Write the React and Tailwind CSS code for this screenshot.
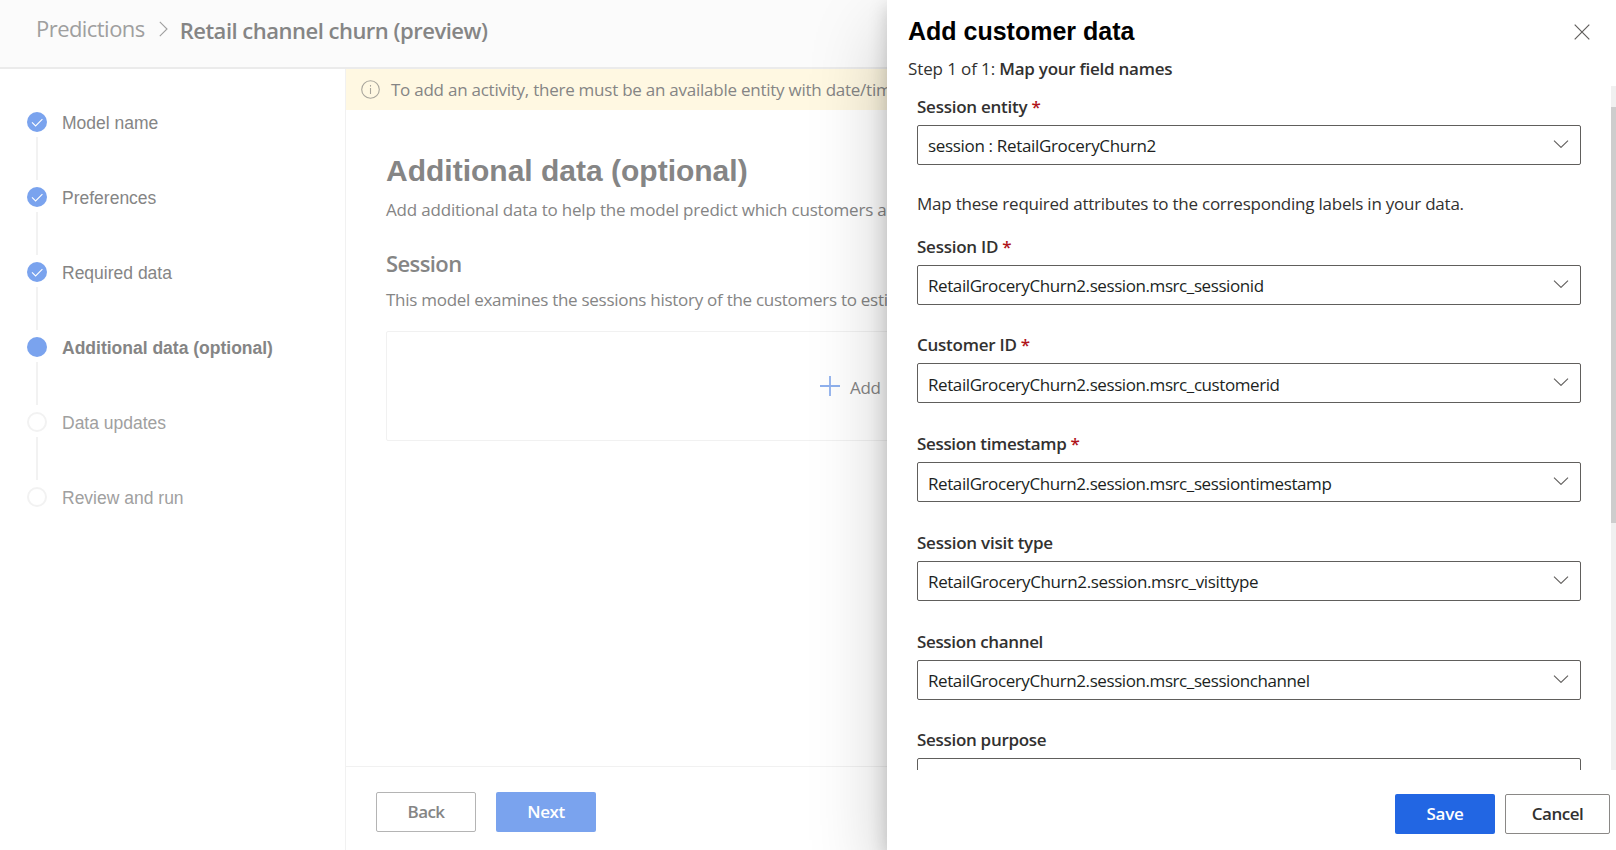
import React from "react";

const STEPS = [
  { label: "Model name", state: "done" },
  { label: "Preferences", state: "done" },
  { label: "Required data", state: "done" },
  { label: "Additional data (optional)", state: "current" },
  { label: "Data updates", state: "todo" },
  { label: "Review and run", state: "todo" },
];

const FIELDS = [
  { label: "Session ID", required: true, value: "RetailGroceryChurn2.session.msrc_sessionid", height: "h-[98px]" },
  { label: "Customer ID", required: true, value: "RetailGroceryChurn2.session.msrc_customerid", height: "h-[99px]", nudge: "pt-[3px]" },
  { label: "Session timestamp", required: true, value: "RetailGroceryChurn2.session.msrc_sessiontimestamp", height: "h-[99px]", nudge: "pt-[3px]", track: "tracking-[-0.34px]" },
  { label: "Session visit type", value: "RetailGroceryChurn2.session.msrc_visittype", height: "h-[99px]", track: "tracking-[-0.24px]", valueTrack: "tracking-[-0.36px]" },
  { label: "Session channel", value: "RetailGroceryChurn2.session.msrc_sessionchannel", height: "h-[98px]", track: "tracking-[-0.35px]" },
  { label: "Session purpose", value: "", height: "h-[99px]", track: "tracking-[-0.3px]" },
];

function StepMarker({ state }) {
  if (state === "todo") {
    return <div className="size-5 shrink-0 rounded-full border-2 border-[#f2f2f2]" />;
  }
  return (
    <div className="flex size-5 shrink-0 items-center justify-center rounded-full bg-[#7aa3ee]">
      {state === "done" && (
        <svg className="size-5" viewBox="0 0 20 20" fill="none" stroke="#fff" strokeWidth="1.1">
          <path d="M5 10.4 L8.6 14 L15.4 7.2" />
        </svg>
      )}
    </div>
  );
}

function Steps() {
  return (
    <nav className="w-[346px] shrink-0 border-r border-[#f1f1f1] pt-[43px] pl-[27px] font-['Liberation_Sans',sans-serif] text-[17.5px]">
      {STEPS.map((step, i) => (
        <div key={step.label} className="h-[75px]">
          <div className="flex h-5 items-center gap-[15px]">
            <StepMarker state={step.state} />
            <span
              className={
                step.state === "current"
                  ? "pt-px leading-5 font-bold text-[#858585]"
                  : step.state === "done"
                    ? "pt-px leading-5 text-[#858585]"
                    : "pt-px leading-5 text-[#a0a0a0]"
              }
            >
              {step.label}
            </span>
          </div>
          {i < STEPS.length - 1 && <div className="mt-[5px] ml-[9px] h-[43px] w-0.5 bg-[#f2f2f2]" />}
        </div>
      ))}
    </nav>
  );
}

function SelectField({ label, required, value, nudge = "pt-px", track = "tracking-[-0.25px]", valueTrack = "tracking-[-0.415px]" }) {
  return (
    <div>
      <div className={`h-6 leading-6 font-semibold text-[#323130] ${track}`}>
        {label}
        {required && <span className="text-[#b0151c]"> *</span>}
      </div>
      <div className="mt-[6px] flex h-10 w-[664px] items-center justify-between rounded-[2px] border border-[#605e5c] pr-[11px] pl-[10px]">
        <span className={`leading-6 text-[#201f1e] ${valueTrack} ${nudge}`}>{value}</span>
        <svg className="mb-0.5 h-2 w-4" viewBox="0 0 16 8" fill="none" stroke="#605e5c" strokeWidth="1.1">
          <path d="M1 0.6 L8 7.4 L15 0.6" />
        </svg>
      </div>
    </div>
  );
}

function Background() {
  return (
    <div className="flex h-full w-full flex-col">
      <header className="flex h-[69px] shrink-0 items-center border-b-2 border-[#ebebeb] bg-[#fbfbfb] pl-9 text-[22px] leading-8">
        <span className="pb-3 tracking-[-0.55px] text-[#9f9f9f]">Predictions</span>
        <svg className="mb-[9px] ml-[14px] h-4 w-[9px]" viewBox="0 0 9 16" fill="none" stroke="#9f9f9f" strokeWidth="1.1">
          <path d="M0.8 0.8 L8 8 L0.8 15.2" />
        </svg>
        <span className="ml-3 pb-2 font-semibold tracking-[-0.5px] text-[#858585]">Retail channel churn (preview)</span>
      </header>
      <div className="flex min-h-0 flex-1">
        <Steps />
        <main className="flex min-w-0 flex-1 flex-col overflow-hidden text-[17px] whitespace-nowrap text-[#858585]">
          <div className="flex h-[41px] shrink-0 items-center bg-[#fff8e2] pl-[15px]">
            <svg className="size-[19px]" viewBox="0 0 19 19" fill="none" stroke="#a8a59c" strokeWidth="1.1">
              <circle cx="9.5" cy="9.5" r="8.8" />
              <path d="M9.5 8v6" />
              <path d="M9.5 5v1.6" />
            </svg>
            <span className="ml-[11px] tracking-[-0.246px]">To add an activity, there must be an available entity with date/time</span>
          </div>
          <div className="flex-1 pt-[45px] pl-10">
            <h1 className="font-['Liberation_Sans',sans-serif] text-[30px] leading-8 font-bold">Additional data (optional)</h1>
            <p className="mt-[11px] leading-6 tracking-[-0.19px]">Add additional data to help the model predict which customers are</p>
            <h2 className="mt-[25px] text-[22px] leading-8 font-semibold tracking-[-0.6px]">Session</h2>
            <p className="mt-[9px] leading-6 tracking-[-0.275px]">This model examines the sessions history of the customers to estimate</p>
            <div className="mt-[19px] flex h-[110px] w-[1100px] items-center rounded-[2px] border border-[#f1f1f1] pl-[433px]">
              <svg className="size-5" viewBox="0 0 20 20" stroke="#8fb1ee" strokeWidth="1.8">
                <path d="M10 0V20M0 10H20" />
              </svg>
              <span className="ml-[10px] pt-[3px] tracking-[-0.3px] [word-spacing:2px]">Add data</span>
            </div>
          </div>
          <footer className="flex h-[84px] shrink-0 items-start gap-5 border-t border-[#f1f1f1] pt-[25px] pl-[30px] font-semibold">
            <button className="h-10 w-[100px] rounded-[2px] border border-[#b4b4b4] tracking-[-0.6px]">Back</button>
            <button className="h-10 w-[100px] rounded-[2px] bg-[#7aa3ee] tracking-[-0.42px] text-white">Next</button>
          </footer>
        </main>
      </div>
    </div>
  );
}

function Panel() {
  return (
    <section className="absolute inset-y-0 right-0 flex w-[729px] flex-col bg-white text-[17px] text-[#323130] shadow-[0_32px_72px_0_rgba(0,0,0,0.22),0_6px_18px_0_rgba(0,0,0,0.18)]">
      <div className="flex h-[86px] shrink-0 justify-between pl-[21px]">
        <div>
          <h2 className="mt-[15px] font-['Liberation_Sans',sans-serif] text-[25px] leading-8 font-bold text-black">Add customer data</h2>
          <p className="mt-[10px] leading-6 tracking-[-0.12px]">
            Step 1 of 1: <span className="font-semibold tracking-[-0.25px]">Map your field names</span>
          </p>
        </div>
        <svg className="mt-6 mr-[26px] size-4" viewBox="0 0 16 16" stroke="#605e5c" strokeWidth="1.2">
          <path d="M0.7 0.7 L15.3 15.3 M15.3 0.7 L0.7 15.3" />
        </svg>
      </div>
      <div className="flex h-[684px] shrink-0 justify-between overflow-hidden">
        <div className="pt-[9px] pl-[30px]">
          <SelectField label="Session entity" required value="session : RetailGroceryChurn2" valueTrack="tracking-[-0.33px]" />
          <p className="mt-[27px] mb-[19px] leading-6 tracking-[-0.23px]">
            Map these required attributes to the corresponding labels in your data.
          </p>
          {FIELDS.map(({ height, ...field }) => (
            <div key={field.label} className={height}>
              <SelectField {...field} />
            </div>
          ))}
        </div>
        <div className="h-[684px] w-[5px] bg-[#f0f0f0] pt-[21px]">
          <div className="h-[416px] bg-[#cdcdcd]" />
        </div>
      </div>
      <div className="flex justify-end gap-[10px] pt-6 pr-1.5 font-semibold">
        <button className="h-10 w-[100px] rounded-[2px] bg-[#2266e3] tracking-[-0.27px] text-white">Save</button>
        <button className="h-10 w-[105px] rounded-[2px] border border-[#8a8886] tracking-[-0.5px]">Cancel</button>
      </div>
    </section>
  );
}

export default function App() {
  return (
    <div className="relative h-[850px] w-[1616px] overflow-hidden bg-white font-['Segoe_UI','Open_Sans',sans-serif]">
      <Background />
      <Panel />
    </div>
  );
}
